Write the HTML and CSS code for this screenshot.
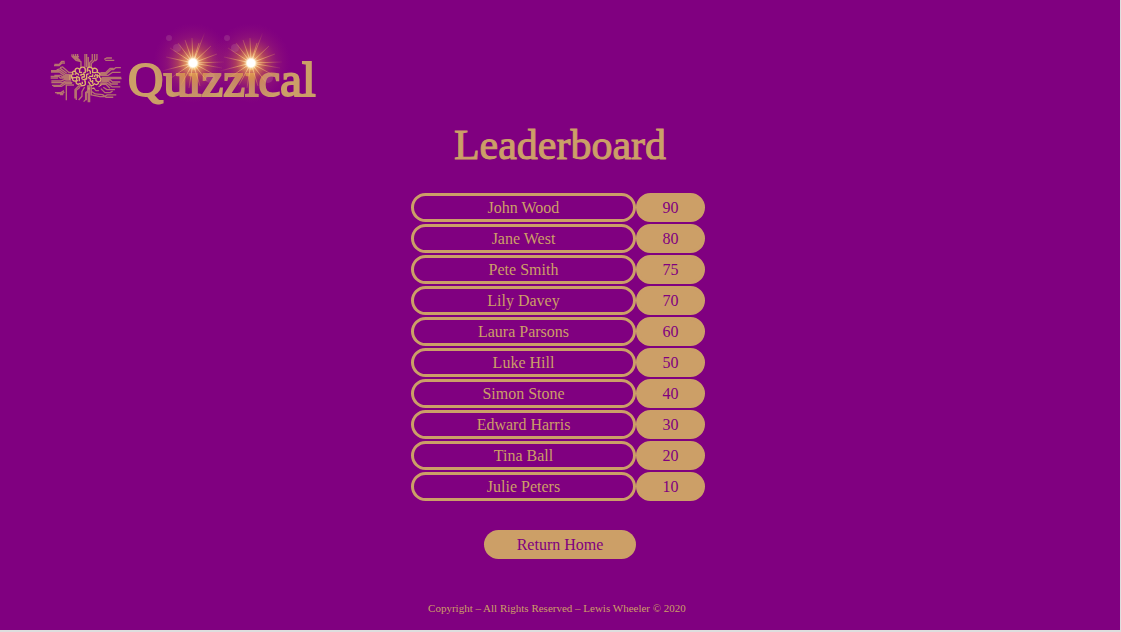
FILE: index.html
```html
<!DOCTYPE html>
<html lang="en">
<head>
<meta charset="utf-8">
<title>Quizzical - Leaderboard</title>
<link rel="stylesheet" href="styles.css">
</head>
<body>
<div class="page">
  <header class="header">
    <a class="logo-link" href="#" aria-label="Quizzical home">
      <svg class="logo" viewBox="40 20 290 100" width="290" height="100">
        <defs>
          <radialGradient id="glow">
            <stop offset="0" stop-color="#fff"/>
            <stop offset=".1" stop-color="#ffeebe"/>
            <stop offset=".18" stop-color="#f0ac58" stop-opacity=".85"/>
            <stop offset=".38" stop-color="#d97a3c" stop-opacity=".5"/>
            <stop offset=".65" stop-color="#b84860" stop-opacity=".22"/>
            <stop offset="1" stop-color="#9c1c78" stop-opacity="0"/>
          </radialGradient>
          <radialGradient id="ray" gradientUnits="userSpaceOnUse" cx="0" cy="0" r="33">
            <stop offset="0" stop-color="#fff" stop-opacity=".9"/>
            <stop offset=".35" stop-color="#f6bd72" stop-opacity=".65"/>
            <stop offset="1" stop-color="#e08a48" stop-opacity="0"/>
          </radialGradient>
          <g id="flare">
            <circle r="40" fill="url(#glow)"/>
            <path fill="none" stroke="url(#ray)" stroke-width="1" d="M0 0L12-31M0 0L-1-25M0 0L-8-23M0 0L-15-20M0 0L-23-15M0 0L-27-6M0 0L-31 8M0 0L-22 15M0 0L-12 22M0 0L-4 25M0 0L7 23M0 0L14 18M0 0L22 12M0 0L29 5M0 0L31-1M0 0L24-9M0 0L18-17M0 0L6-20"/>
            <circle r="5" fill="#fff8e6" fill-opacity=".7"/>
            <circle r="4" fill="#fff"/>
            <g fill="#d6a0b4" fill-opacity=".18">
              <circle cx="-16" cy="-15" r="4"/><circle cx="-24" cy="-25" r="3"/><circle cx="17" cy="15" r="5"/>
            </g>
          </g>
        </defs>
        <g transform="translate(40 45) scale(.333)" fill="none" stroke="#cc9f67" stroke-linejoin="round">
          <path stroke-width="4" stroke-opacity=".72" d="M96 28V34L108 46L123 50V70M101 28V36L116 46M107 27V36L118 45M113 27V40L121 47M96 35H117M135 27V67M140 27V67M145 36V67M157 27V45L149 53V68M164 27V46L154 56V70M171 27V43L166 48M193 43L200 39H216M196 46H223M42 62H57L66 54H75M43 58H58L65 49H74M60 68L68 66L86 82H98M33 77H61L76 88H94M33 81H58L73 92H92M50 75L62 71L80 84M32 94H56L61 99H91M32 99H54M43 91H61L67 95H91M34 108H64L74 103H92M34 113H68L77 108H94M36 121H61L73 113H97M40 124H65L79 115H96M45 143H63L72 137M50 146H68L73 141M60 149H70M79 166V120H99M83 120H102M105 161V134L116 123H127M109 165V136L120 127M116 165L126 154V140L134 126M131 170L137 164V143L143 138V121M139 166V145L147 137V120M145 123V172M149 121V172M154 122V150L180 155H192L202 150H229M154 139L166 147L188 149L198 157H220M160 128L168 137H177M183 131L195 143H211L218 138M190 127L201 134H225M180 87H199L213 74H220L227 68H243M181 83H197L211 70H221M183 91H205L218 82H242M185 97H244M184 101H245M185 105H211L218 111H241M184 109H205L213 117H234M181 114H201L217 126H241M179 118H198L210 130"/>
          <g stroke="#dfb46b" stroke-width="4">
            <path d="M101 88C93 85 99 76 106 80C103 70 114 66 119 74C122 63 136 65 136 74V82L129 85M142 80V74C142 64 156 64 158 73C165 65 176 74 171 82C181 82 182 91 178 96C186 101 184 110 176 111C176 119 168 121 163 116C159 125 150 123 149 116L145 110M136 109V118C131 126 121 121 121 115C114 121 106 116 109 108C98 110 95 102 100 98C91 96 92 88 101 88"/>
            <path d="M107 80C107 89 117 83 116 91M101 98H110V105M119 74V82H126M123 93V88H133V96H126V103M109 94L118 98V109M127 110V117M134 102H140V89L146 86M145 74L151 79V87M158 75V83H166L170 82M147 94H158V88M165 89L177 93M151 100V108L160 112M157 100H168V107L175 111M164 96V91M114 107L107 108M127 104H135V112M144 97L151 101M109 87L104 88M158 105V116M172 88V99"/>
          </g>
          <path stroke="#dfb46b" stroke-width="3" d="M90 90V105M94 93V101M156 130H164M147 128V134M176 125L185 120"/>
        </g>
        <text class="wordmark" x="128" y="96">Quizzical</text>
        <use href="#flare" x="193" y="63"/>
        <use href="#flare" x="251" y="63"/>
      </svg>
    </a>
  </header>
  <main class="main">
    <h1 class="title">Leaderboard</h1>
    <table class="scores" aria-label="Leaderboard scores">
      <tbody>
        <tr><td class="name">John Wood</td><td class="score">90</td></tr>
        <tr><td class="name">Jane West</td><td class="score">80</td></tr>
        <tr><td class="name">Pete Smith</td><td class="score">75</td></tr>
        <tr><td class="name">Lily Davey</td><td class="score">70</td></tr>
        <tr><td class="name">Laura Parsons</td><td class="score">60</td></tr>
        <tr><td class="name">Luke Hill</td><td class="score">50</td></tr>
        <tr><td class="name">Simon Stone</td><td class="score">40</td></tr>
        <tr><td class="name">Edward Harris</td><td class="score">30</td></tr>
        <tr><td class="name">Tina Ball</td><td class="score">20</td></tr>
        <tr><td class="name">Julie Peters</td><td class="score">10</td></tr>
      </tbody>
    </table>
    <button class="home" type="button">Return Home</button>
  </main>
  <footer class="footer">Copyright – All Rights Reserved – Lewis Wheeler © 2020</footer>
</div>
</body>
</html>
```
FILE: styles.css
```css
* {
  box-sizing: border-box;
}

body {
  margin: 0;
  padding: 0 1px 2px 0;
  background: #dedede;
  color: #cc9f67;
  font-family: "Liberation Serif", "Times New Roman", serif;
}

.page {
  display: flex;
  flex-direction: column;
  min-height: calc(100vh - 2px);
  background: #800080;
}

.header {
  padding: 20px 40px 0;
}

.logo-link,
.logo {
  display: block;
  width: max-content;
}

.logo {
  overflow: visible;
}

.wordmark {
  fill: #cc9f67;
  stroke: #cc9f67;
  stroke-width: 2px;
  font-family: "Liberation Serif", "Times New Roman", serif;
  font-size: 49px;
}

.main {
  display: flex;
  flex-direction: column;
  align-items: center;
}

.title {
  margin: 0;
  font-size: 42px;
  font-weight: 400;
  line-height: 50px;
  -webkit-text-stroke: 1px #cc9f67;
}

.scores {
  margin: 21px 4px 0 0;
  border-spacing: 0 2px;
  font-size: 16px;
  line-height: 23px;
  text-align: center;
}

.name,
.score {
  padding: 0;
  border: 3px solid #cc9f67;
  border-radius: 15px;
}

.name {
  width: 225px;
}

.score {
  width: 69px;
  background: #cc9f67;
  color: #800080;
}

.home {
  margin-top: 27px;
  padding: 3px 33px;
  border: 0;
  border-radius: 15px;
  background: #cc9f67;
  color: #800080;
  font-family: inherit;
  font-size: 16px;
  line-height: 23px;
  cursor: pointer;
}

.footer {
  margin-top: auto;
  padding: 0 6px 15px 0;
  font-size: 11px;
  line-height: 14px;
  text-align: center;
}
```
